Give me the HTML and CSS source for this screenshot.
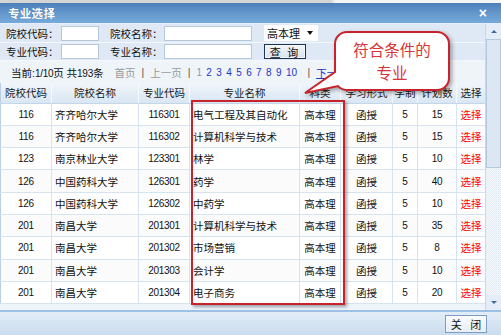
FILE: index.html
```html
<!DOCTYPE html>
<html lang="zh-CN">
<head>
    <meta charset="UTF-8">
    <title>专业选择</title>
    <link rel="stylesheet" href="styles.css">
</head>
<body>
    <div class="strip"></div>
    <div class="dialog">
        <div class="titlebar">
            <span class="title">专业选择</span>
            <span class="close">×</span>
        </div>

        <div class="body">
            <div class="content">
                <div class="search">
                    <div class="search-row">
                        <span class="label">院校代码：</span>
                        <span class="input short"></span>
                        <span class="label gap">院校名称：</span>
                        <span class="input long"></span>
                        <span class="select">高本理<i class="arrow"></i></span>
                    </div>
                    <div class="search-row">
                        <span class="label">专业代码：</span>
                        <span class="input short"></span>
                        <span class="label gap">专业名称：</span>
                        <span class="input long"></span>
                        <span class="btn-query">查 询</span>
                    </div>
                </div>

                <div class="pager">
                    <span class="info">当前:<b>1/10</b>页 共<b>193</b>条</span>
                    <span class="off first">首页</span>
                    <span class="sep">|</span>
                    <span class="off">上一页</span>
                    <span class="sep">|</span>
                    <span class="pages">
                        <a class="current">1</a><a>2</a><a>3</a><a>4</a><a>5</a><a>6</a><a>7</a><a>8</a><a>9</a><a>10</a>
                    </span>
                    <span class="sep">|</span>
                    <a class="next">下一页</a>
                </div>

                <table class="grid">
                    <colgroup>
                        <col style="width: 51px">
                        <col style="width: 87px">
                        <col style="width: 51px">
                        <col style="width: 110px">
                        <col style="width: 41px">
                        <col style="width: 52px">
                        <col style="width: 25px">
                        <col style="width: 39px">
                        <col style="width: 29px">
                    </colgroup>
                    <thead>
                        <tr>
                            <th>院校代码</th><th>院校名称</th><th>专业代码</th><th>专业名称</th><th>科类</th><th>学习形式</th><th>学制</th><th>计划数</th><th>选择</th>
                        </tr>
                    </thead>
                    <tbody>
                        <tr><td class="num">116</td><td class="left">齐齐哈尔大学</td><td class="num">116301</td><td class="left">电气工程及其自动化</td><td>高本理</td><td>函授</td><td class="num">5</td><td class="num">15</td><td class="pick">选择</td></tr>
                        <tr><td class="num">116</td><td class="left">齐齐哈尔大学</td><td class="num">116302</td><td class="left">计算机科学与技术</td><td>高本理</td><td>函授</td><td class="num">5</td><td class="num">15</td><td class="pick">选择</td></tr>
                        <tr><td class="num">123</td><td class="left">南京林业大学</td><td class="num">123301</td><td class="left">林学</td><td>高本理</td><td>函授</td><td class="num">5</td><td class="num">10</td><td class="pick">选择</td></tr>
                        <tr><td class="num">126</td><td class="left">中国药科大学</td><td class="num">126301</td><td class="left">药学</td><td>高本理</td><td>函授</td><td class="num">5</td><td class="num">40</td><td class="pick">选择</td></tr>
                        <tr><td class="num">126</td><td class="left">中国药科大学</td><td class="num">126302</td><td class="left">中药学</td><td>高本理</td><td>函授</td><td class="num">5</td><td class="num">10</td><td class="pick">选择</td></tr>
                        <tr><td class="num">201</td><td class="left">南昌大学</td><td class="num">201301</td><td class="left">计算机科学与技术</td><td>高本理</td><td>函授</td><td class="num">5</td><td class="num">35</td><td class="pick">选择</td></tr>
                        <tr><td class="num">201</td><td class="left">南昌大学</td><td class="num">201302</td><td class="left">市场营销</td><td>高本理</td><td>函授</td><td class="num">5</td><td class="num">8</td><td class="pick">选择</td></tr>
                        <tr><td class="num">201</td><td class="left">南昌大学</td><td class="num">201303</td><td class="left">会计学</td><td>高本理</td><td>函授</td><td class="num">5</td><td class="num">10</td><td class="pick">选择</td></tr>
                        <tr><td class="num">201</td><td class="left">南昌大学</td><td class="num">201304</td><td class="left">电子商务</td><td>高本理</td><td>函授</td><td class="num">5</td><td class="num">20</td><td class="pick">选择</td></tr>
                    </tbody>
                </table>
            </div>

            <div class="scrollbar">
                <div class="sb-btn"><i class="up"></i></div>
                <div class="sb-thumb"></div>
                <div class="sb-track"></div>
                <div class="sb-btn"><i class="down"></i></div>
            </div>
        </div>

        <div class="footer">
            <span class="btn-close">关 闭</span>
        </div>

        <!-- annotation drawn over the grid -->
        <div class="highlight"></div>
        <div class="callout">
            <svg width="156" height="70" viewBox="0 0 156 70">
                <path d="M47,4 H137 A12,12 0 0 1 149,16 V50 A12,12 0 0 1 137,62 H49 Q41,62 38,58 L5,65 L35,44 V16 A12,12 0 0 1 47,4 Z"
                      fill="#fff" stroke="#c8232c" stroke-width="2"/>
            </svg>
            <div class="callout-text">
                <div>符合条件的</div>
                <div>专业</div>
            </div>
        </div>
    </div>
</body>
</html>
```

FILE: styles.css
```css
* {
    margin: 0;
    padding: 0;
    box-sizing: border-box;
}

body {
    width: 501px;
    height: 335px;
    overflow: hidden;
    font-family: "Liberation Sans", "Noto Sans CJK SC", sans-serif;
    font-size: 10.5px;
    color: #111;
    background: #fff;
}

.strip {
    height: 3px;
    background: linear-gradient(90deg, #d4d4d4 0%, #d4d4d4 66%, #f4f4f4 67%, #f4f4f4 100%);
}

.dialog {
    position: relative;
    height: 332px;
    display: flex;
    flex-direction: column;
}

.titlebar {
    height: 21px;
    display: flex;
    align-items: center;
    justify-content: space-between;
    padding: 0 14px 0 8px;
    background: linear-gradient(#4a7fb9, #6699cd 55%, #76aada);
    border-bottom: 1px solid #e7eef7;
    color: #fff;
}

.title {
    font-family: "Noto Sans CJK SC", sans-serif;
    font-size: 11.5px;
    font-weight: bold;
    letter-spacing: 0.3px;
    text-shadow: 0 0 1px #3d6d9f;
}

.close {
    font-size: 14px;
    font-weight: bold;
    line-height: 1;
}

.body {
    height: 286px;
    display: flex;
    background: #eef4fa;
}

.content {
    width: 485px;
    overflow: hidden;
}

/* search form */
.search {
    height: 37px;
    background: #dfe9f5;
}

.search-row {
    height: 18px;
    display: flex;
    align-items: center;
    padding-left: 6px;
    border-bottom: 1px solid #f4f8fc;
}

.search-row:first-child {
    height: 19px;
}

.label {
    width: 55px;
    font-family: "Noto Sans CJK SC", sans-serif;
    color: #111;
}

.label.gap {
    width: 54px;
    margin-left: 11px;
}

.input {
    height: 15px;
    background: #fff;
    border: 1px solid #b7c8da;
}

.input.short {
    width: 38px;
}

.input.long {
    width: 88px;
}

.select {
    width: 54px;
    height: 16px;
    margin-left: 12px;
    padding-left: 3px;
    display: flex;
    align-items: center;
    background: #fff;
    font-family: "Noto Sans CJK SC", sans-serif;
    font-size: 11px;
}

.arrow {
    margin-left: 7px;
    border-left: 3px solid transparent;
    border-right: 3px solid transparent;
    border-top: 4px solid #111;
}

.btn-query {
    width: 42px;
    height: 15px;
    margin-left: 12px;
    display: flex;
    align-items: center;
    justify-content: center;
    border: 1px solid #1d3450;
    box-shadow: inset 0 0 0 1px #f4f7fb;
    background: linear-gradient(#f2f5f9, #d9e2ec);
    font-family: "Noto Sans CJK SC", sans-serif;
    font-size: 11px;
    letter-spacing: 2px;
}

/* pager */
.pager {
    height: 22px;
    display: flex;
    align-items: center;
    padding-left: 11px;
    background: #eff4f9;
    color: #111;
}

.pager b {
    font-weight: normal;
    font-size: 10px;
    letter-spacing: -0.3px;
}

.off {
    color: #9a9a9a;
}

.first {
    margin-left: 11px;
}

.sep {
    margin: 0 6px;
    color: #555;
}

.pages a {
    font-size: 10px;
    color: #1d35c8;
    margin-right: 4.4px;
}

.pages a.current {
    color: #9a9a9a;
}

.next {
    color: #1d35c8;
    text-decoration: underline;
}

/* result grid */
.grid {
    width: 485px;
    table-layout: fixed;
    border-collapse: collapse;
    background: #fff;
}

.grid th {
    height: 20px;
    font-weight: normal;
    color: #1a1a1a;
    background: linear-gradient(#f0f5fa, #d9e6f3);
    border-right: 1px solid #f7fafd;
    border-bottom: 1px solid #c4d6e9;
    white-space: nowrap;
    overflow: hidden;
}

.grid td {
    height: 22.3px;
    text-align: center;
    border-right: 1px solid #d6e3f0;
    border-bottom: 1px solid #d6e3f0;
    white-space: nowrap;
    overflow: hidden;
}

.grid tbody tr:nth-child(odd) td {
    background: #fff;
}

.grid tbody tr:nth-child(even) td {
    background: #fbfbfb;
}

.grid td:first-child,
.grid th:first-child {
    border-left: 1px solid #b9cfe6;
}

.grid td.left {
    text-align: left;
    padding-left: 3px;
}

.grid td.num {
    font-size: 10px;
    letter-spacing: -0.3px;
}

.grid td.pick {
    color: #f00;
}

/* scrollbar */
.scrollbar {
    width: 16px;
    display: flex;
    flex-direction: column;
    border-left: 1px solid #c9d8e8;
}

.sb-btn {
    height: 15px;
    display: flex;
    align-items: center;
    justify-content: center;
    background: #e4edf7;
}

.sb-btn i {
    border-left: 3px solid transparent;
    border-right: 3px solid transparent;
}

.sb-btn .up {
    border-bottom: 3px solid #3e6aa0;
}

.sb-btn .down {
    border-top: 3px solid #3e6aa0;
}

.sb-thumb {
    height: 129px;
    background: #dce7f3;
    border: 1px solid #b3c9e0;
}

.sb-track {
    flex: 1;
    background: repeating-conic-gradient(#e3ebf4 0% 25%, #f5f8fc 0% 50%) 0 0 / 2px 2px;
}

/* footer */
.footer {
    flex: 1;
    display: flex;
    align-items: center;
    justify-content: flex-end;
    padding-right: 14px;
    border-top: 2px solid #9cc0e6;
    background: linear-gradient(#e2edf8, #c9dcef);
}

.btn-close {
    width: 42px;
    height: 18px;
    display: flex;
    align-items: center;
    justify-content: center;
    border: 1px solid #7d9dc2;
    background: linear-gradient(#fbfcfe, #e6edf5);
    font-family: "Noto Sans CJK SC", sans-serif;
    font-size: 11px;
    letter-spacing: 3px;
    padding-left: 3px;
}

/* annotation */
.highlight {
    position: absolute;
    left: 191px;
    top: 97px;
    width: 154px;
    height: 205px;
    border: 2px solid #c8232c;
    box-shadow: 2px 2px 3px rgba(0, 0, 0, 0.35);
}

.callout {
    position: absolute;
    left: 300px;
    top: 25px;
    width: 156px;
    height: 70px;
}

.callout svg {
    display: block;
    filter: drop-shadow(2px 2px 2px rgba(0, 0, 0, 0.35));
}

.callout-text {
    position: absolute;
    left: 49px;
    top: 10px;
    width: 86px;
    text-align: center;
    font-family: "Noto Sans CJK SC", sans-serif;
    font-size: 15.5px;
    line-height: 22.5px;
    color: #d8343a;
}
```
